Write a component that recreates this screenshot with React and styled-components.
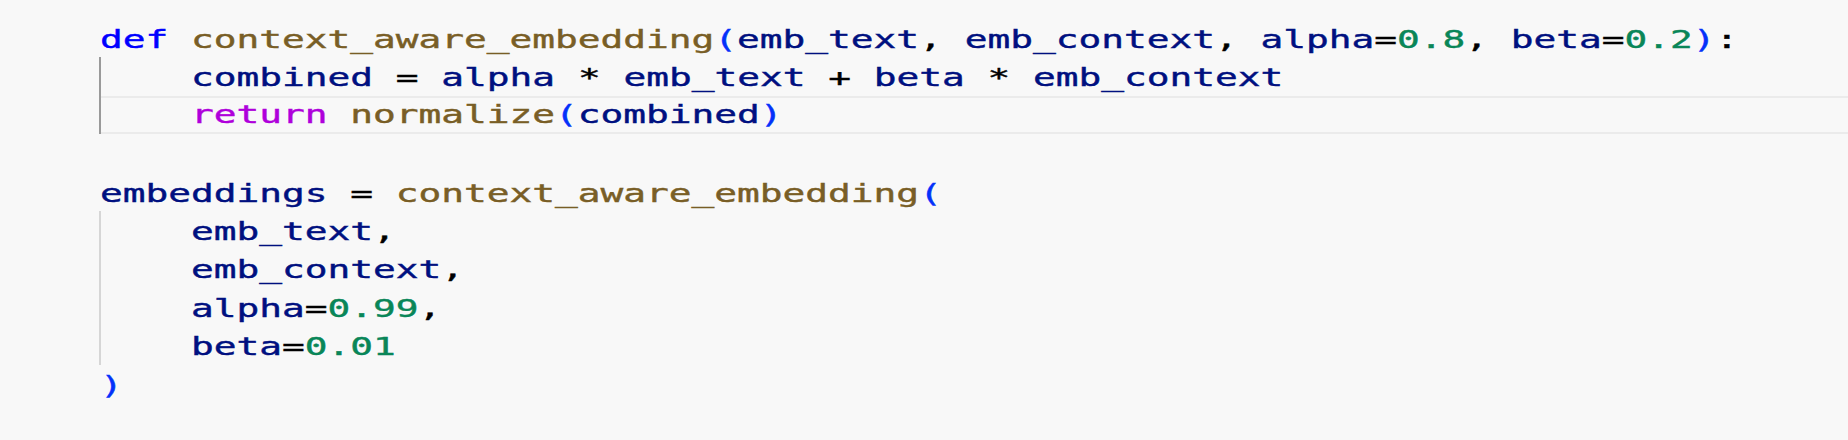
import React from "react";
import styled, { createGlobalStyle } from "styled-components";

const CHAR = 22.75; // advance of one column in the picture
const FONT = 25;
const STRETCH = CHAR / (FONT * 0.602);

const GlobalStyle = createGlobalStyle`
  html, body {
    margin: 0;
    padding: 0;
    background: #f8f8f8;
  }
`;

const Editor = styled.div`
  width: 1848px;
  height: 440px;
  box-sizing: border-box;
  padding: 19px 0 0 100px;
  background: #f8f8f8;
  font-family: "DejaVu Sans Mono", "Liberation Mono", monospace;
  font-size: ${FONT}px;
  overflow: hidden;
`;

const Block = styled.div`
  border-left: 2px solid ${(p) => p.$guide};
  margin-left: -1px;
`;

const Line = styled.div`
  height: 38.4px;
  box-sizing: border-box;
  white-space: pre;
  padding-left: ${(p) => (p.$indent ? p.$indent * CHAR - 1 : 0)}px;
  border-top: 2px solid ${(p) => (p.$current ? "#ebebeb" : "transparent")};
  border-bottom: 2px solid ${(p) => (p.$current ? "#ebebeb" : "transparent")};
  line-height: ${(p) => (p.$current ? 34.4 : 38.4)}px;
`;

const Text = styled.span`
  display: inline-block;
  transform: scaleX(${STRETCH});
  transform-origin: left center;
`;

const colors = {
  kw: "#0000ff",
  ctrl: "#af00db",
  fn: "#795e26",
  v: "#001080",
  num: "#098658",
  op: "#000000",
  br: "#0431fa",
};

const Tok = styled.span`
  color: ${(p) => colors[p.$k]};
  -webkit-text-stroke: 0.4px ${(p) => colors[p.$k]};
`;

const T = ({ k, children }) => <Tok $k={k}>{children}</Tok>;

export default function App() {
  return (
    <>
      <GlobalStyle />
      <Editor>
        <Line>
          <Text>
            <T k="kw">def</T> <T k="fn">context_aware_embedding</T>
            <T k="br">(</T>
            <T k="v">emb_text</T>
            <T k="op">, </T>
            <T k="v">emb_context</T>
            <T k="op">, </T>
            <T k="v">alpha</T>
            <T k="op">=</T>
            <T k="num">0.8</T>
            <T k="op">, </T>
            <T k="v">beta</T>
            <T k="op">=</T>
            <T k="num">0.2</T>
            <T k="br">)</T>
            <T k="op">:</T>
          </Text>
        </Line>
        <Block $guide="#9a9a9a">
          <Line $indent={4}>
            <Text>
              <T k="v">combined</T> <T k="op">=</T> <T k="v">alpha</T>{" "}
              <T k="op">*</T> <T k="v">emb_text</T> <T k="op">+</T>{" "}
              <T k="v">beta</T> <T k="op">*</T> <T k="v">emb_context</T>
            </Text>
          </Line>
          <Line $indent={4} $current>
            <Text>
              <T k="ctrl">return</T> <T k="fn">normalize</T>
              <T k="br">(</T>
              <T k="v">combined</T>
              <T k="br">)</T>
            </Text>
          </Line>
        </Block>
        <Line />
        <Line>
          <Text>
            <T k="v">embeddings</T> <T k="op">=</T>{" "}
            <T k="fn">context_aware_embedding</T>
            <T k="br">(</T>
          </Text>
        </Line>
        <Block $guide="#d6d6d6">
          <Line $indent={4}>
            <Text>
              <T k="v">emb_text</T>
              <T k="op">,</T>
            </Text>
          </Line>
          <Line $indent={4}>
            <Text>
              <T k="v">emb_context</T>
              <T k="op">,</T>
            </Text>
          </Line>
          <Line $indent={4}>
            <Text>
              <T k="v">alpha</T>
              <T k="op">=</T>
              <T k="num">0.99</T>
              <T k="op">,</T>
            </Text>
          </Line>
          <Line $indent={4}>
            <Text>
              <T k="v">beta</T>
              <T k="op">=</T>
              <T k="num">0.01</T>
            </Text>
          </Line>
        </Block>
        <Line>
          <Text>
            <T k="br">)</T>
          </Text>
        </Line>
      </Editor>
    </>
  );
}
